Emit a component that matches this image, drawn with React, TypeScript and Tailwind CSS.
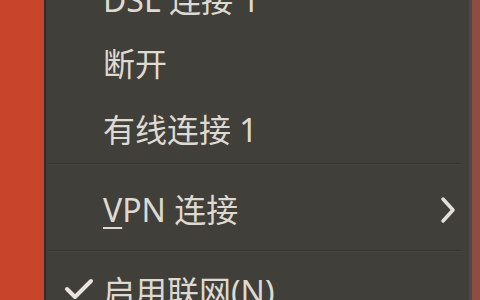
import React from "react";

const font = { fontFamily: '"Noto Sans", "Noto Sans CJK SC", sans-serif' };

function Sep({ top }: { top: boolean }) {
  return (
    <div className={top ? "h-[18px] shrink-0 flex flex-col pt-[3px] pl-[2px] pr-[8px]" : "h-[18px] shrink-0 flex flex-col pt-[8px] pl-[2px] pr-[8px]"}>
      <div className="h-px bg-[#35342f]" />
      <div className="h-px bg-[#47463f]" />
    </div>
  );
}

export default function App() {
  return (
    <div className="w-[480px] h-[300px] overflow-hidden flex bg-[#403f3a]" style={font}>
      <div className="w-[44px] bg-[#c8442b] shrink-0" />
      <div className="w-[2px] bg-[#2f2e2a] shrink-0" />
      <div className="flex-1 flex flex-col -mt-[32px] text-[32px] leading-none text-[#dedad2]">
        <div className="h-[64px] shrink-0 flex items-center pl-[57px]">DSL 连接 1</div>
        <div className="h-[64px] shrink-0 flex items-center pl-[57px]">断开</div>
        <div className="h-[64px] shrink-0 flex items-center pl-[57px] pt-[4px]">有线连接 1</div>
        <Sep top={true} />
        <div className="h-[64px] shrink-0 flex items-center pl-[57px] pr-[12px] justify-between">
          <span>
            <span className="underline underline-offset-[5px] decoration-[2px]">V</span>PN 连接
          </span>
          <svg width="18" height="30" viewBox="0 0 18 30">
            <path d="M4 4 L14 15 L4 26" fill="none" stroke="#e4e1da" strokeWidth="3.5" strokeLinecap="round" strokeLinejoin="round" />
          </svg>
        </div>
        <Sep top={false} />
        <div className="h-[64px] shrink-0 flex items-center pl-[18px]">
          <svg width="30" height="24" viewBox="0 0 30 24" className="mr-[9px] mt-[-6px]">
            <path d="M3 12 L11 20 L27 4" fill="none" stroke="#e8e5de" strokeWidth="4" strokeLinecap="round" strokeLinejoin="round" />
          </svg>
          <span>启用联网(N)</span>
        </div>
      </div>
      <div className="w-[3px] bg-[#4a4950] shrink-0" />
      <div className="w-[8px] bg-[#8d4e3f] shrink-0" />
    </div>
  );
}
